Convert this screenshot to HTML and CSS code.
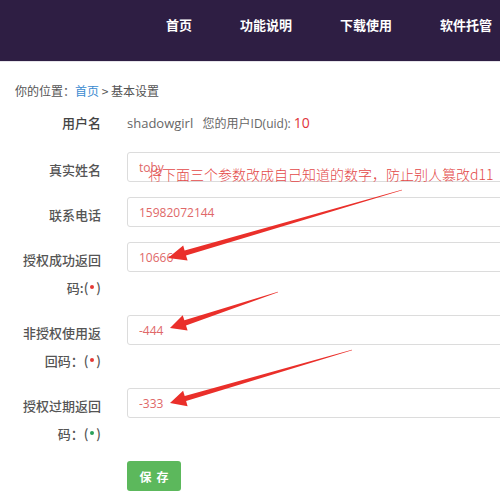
FILE: index.html
```html
<!DOCTYPE html>
<html lang="zh-CN">
<head>
  <meta charset="UTF-8" />
  <meta name="viewport" content="width=device-width, initial-scale=1.0" />
  <title>基本设置</title>
  <link rel="stylesheet" href="styles.css">
</head>
<body>

<header class="topbar">
  <nav class="nav">
    <a href="#">首页</a>
    <a href="#">功能说明</a>
    <a href="#">下载使用</a>
    <a href="#">软件托管</a>
  </nav>
</header>

<main class="page">
  <div class="crumb">你的位置：<a href="#">首页</a> &gt; 基本设置</div>

  <form class="settings">
    <div class="row row-text">
      <label>用户名</label>
      <div class="value">shadowgirl <span class="uid">您的用户ID(uid): <b>10</b></span></div>
    </div>
    <div class="row">
      <label for="realname">真实姓名</label>
      <input type="text" id="realname" value="toby" />
    </div>
    <div class="row">
      <label for="phone">联系电话</label>
      <input type="text" id="phone" value="15982072144" />
    </div>
    <div class="row">
      <label for="okcode">授权成功返回码:(<i class="dot"></i>)</label>
      <input type="text" id="okcode" value="10666" />
    </div>
    <div class="row">
      <label for="nocode">非授权使用返回码：(<i class="dot"></i>)</label>
      <input type="text" id="nocode" value="-444" />
    </div>
    <div class="row">
      <label for="expcode">授权过期返回码：(<i class="dot green"></i>)</label>
      <input type="text" id="expcode" value="-333" />
    </div>
    <div class="row row-btn">
      <button type="button" class="save">保存</button>
    </div>
  </form>
</main>

<!-- red hand-drawn notes on top of the form -->
<div class="notes">
  <div class="note-text">将下面三个参数改成自己知道的数字，防止别人篡改d11</div>
  <svg class="arrows" width="500" height="500" viewBox="0 0 500 500">
    <polygon points="402.1,190.3 186.0,255.6 187.6,260.6 168,258 183.2,245.4 184.6,250.4 401.9,189.7" />
    <polygon points="278.1,292.3 186.0,325.5 187.6,330.4 170,328 182.7,315.3 184.4,320.3 277.9,291.7" />
    <polygon points="352.1,350.3 186.1,401.0 187.6,406.2 170,403 183.1,390.8 184.7,395.9 351.9,349.7" />
  </svg>
</div>

</body>
</html>
```

FILE: styles.css
```css
body {
  margin: 0;
  padding: 0;
  background: #fff;
  font-family: "Open Sans", "Noto Sans CJK SC", sans-serif;
  color: #555;
  overflow: hidden;
}
.topbar {
  background: #2e1e43;
  height: 62px;
  border-bottom: 1px solid #e6e4ea;
  box-sizing: border-box;
}
.nav {
  display: flex;
  gap: 48px;
  padding: 15px 0 0 166px;
  white-space: nowrap;
}
.nav a {
  color: #fff;
  text-decoration: none;
  font-family: "Noto Sans CJK SC", sans-serif;
  font-size: 13px;
  font-weight: bold;
}
.page {
  width: 560px;
}
.crumb {
  margin: 19px 0 0 15px;
  font-family: "Noto Sans CJK SC", sans-serif;
  font-size: 12px;
  line-height: 20px;
  color: #555;
}
.crumb a {
  color: #3b8bd0;
  text-decoration: none;
}
.settings {
  margin-top: 7px;
  padding-left: 20px;
}
.row {
  display: grid;
  grid-template-columns: 81px 1fr;
  column-gap: 26px;
  align-items: start;
  margin-bottom: 13px;
}
.row label {
  text-align: right;
  font-family: "Noto Sans CJK SC", sans-serif;
  font-size: 13px;
  font-weight: 500;
  line-height: 28px;
  padding-top: 4px;
  color: #555;
}
.row-text label {
  padding-top: 1px;
  color: #444;
}
.value {
  font-size: 13px;
  line-height: 30px;
  color: #666;
}
.uid {
  margin-left: 6px;
  font-size: 12px;
}
.uid b {
  font-weight: normal;
  font-size: 14px;
  color: #e0333a;
}
.dot {
  display: inline-block;
  width: 4px;
  height: 4px;
  border-radius: 50%;
  background: #e53935;
  margin: 0 2px;
  vertical-align: 4px;
}
.dot.green {
  background: #2aa05a;
}
.row input {
  width: 100%;
  height: 30px;
  box-sizing: border-box;
  padding: 0 11px;
  border: 1px solid #dcdcdc;
  border-radius: 3px;
  font-family: "Open Sans", sans-serif;
  font-size: 12px;
  color: #e06868;
  background: #fff;
  outline: none;
}
.save {
  grid-column: 2;
  width: 54px;
  height: 30px;
  border: none;
  border-radius: 3px;
  background: #5cb85c;
  color: #fff;
  font-family: "Noto Sans CJK SC", sans-serif;
  font-size: 12px;
  font-weight: bold;
  letter-spacing: 5px;
  text-indent: 5px;
  cursor: pointer;
}
.notes {
  position: absolute;
  top: 0;
  left: 0;
  width: 500px;
  height: 500px;
  pointer-events: none;
}
.note-text {
  position: absolute;
  left: 148px;
  top: 164px;
  font-family: "Noto Sans CJK SC", sans-serif;
  font-size: 14px;
  font-weight: 300;
  color: #e34848;
  white-space: nowrap;
}
.arrows polygon {
  fill: #ea2f2a;
}
```
